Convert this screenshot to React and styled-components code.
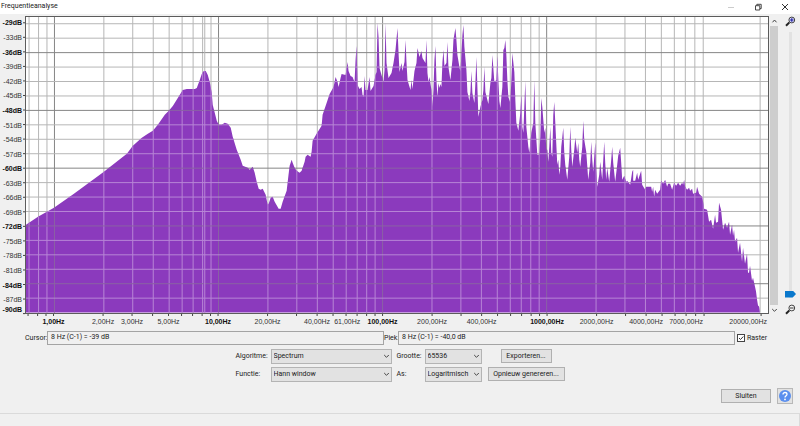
import React, { useState } from 'react'
import styled, { createGlobalStyle } from 'styled-components'

const GlobalStyle = createGlobalStyle`
    * { box-sizing: border-box; }
    body { margin: 0; background: #f0f0f0; }
    body, button, input, select {
        font-family: Roboto, 'Open Sans', sans-serif;
        font-size: 7px;
        color: #1a1a1a;
    }
`
const Window = styled.div`
    display: flex;
    flex-direction: column;
    min-height: 100vh;
    background-color: #f0f0f0;
`
const TitleBar = styled.header`
    display: flex;
    align-items: center;
    justify-content: space-between;
    height: 14px;
    padding: 0 11px 1px 1px;
    background-color: #fff;
`
const Title = styled.h1`
    margin: 0;
    font-size: 7px;
    font-weight: 400;
    line-height: 13px;
`
const WindowButtons = styled.div`
    display: flex;
    gap: 19px;
`
const IconButton = styled.button`
    display: flex;
    align-items: center;
    justify-content: center;
    width: ${({ $w }) => $w || 8}px;
    height: ${({ $h }) => $h || 8}px;
    padding: 0;
    border: none;
    background: none;
`
const ChartArea = styled.main`
    display: flex;
    flex: 1;
    min-height: 180px;
    padding-top: 2px;
`
const Chart = styled.div`
    display: grid;
    flex: 1;
    min-width: 0;
    grid-template-columns: 25px minmax(0, 1fr);
    grid-template-rows: minmax(0, 1fr) 16px;
`
const YAxis = styled.svg`
    width: 25px;
    height: 100%;
    overflow: visible;
`
const PlotFrame = styled.div`
    display: flex;
    min-width: 0;
    min-height: 0;
    border: 1px solid #5c5c5c;
    background-color: #fff;
`
const Plot = styled.svg`
    flex: 1;
    min-width: 0;
    height: 100%;
`
const XAxis = styled.svg`
    grid-column: 2;
    width: 100%;
    height: 16px;
    overflow: visible;
`
const AxisText = styled.text`
    font-family: 'Liberation Sans', Arial, sans-serif;
    font-size: 7px;
    font-weight: ${({ $bold }) => ($bold ? 700 : 400)};
    fill: ${({ $bold }) => ($bold ? '#111' : '#333')};
    text-anchor: ${({ $anchor }) => $anchor || 'middle'};
`
const ScrollBar = styled.div`
    display: flex;
    flex-direction: column;
    align-items: center;
    width: 8px;
    margin: 0 1px 15px 1px;
`
const ScrollThumb = styled.div`
    flex: 1;
    width: 8px;
    background-color: #cdcdcd;
`
const ZoomColumn = styled.div`
    display: flex;
    flex-direction: column;
    align-items: center;
    width: 21px;
    padding: 0 0 15px 2px;
`
const ZoomSlider = styled.input`
    appearance: none;
    writing-mode: vertical-lr;
    direction: rtl;
    flex: 1;
    width: 11px;
    min-height: 0;
    margin: 5px 0 6px;
    background: linear-gradient(#e2e2e2, #e2e2e2) center / 3px 100% no-repeat;

    &::-webkit-slider-thumb {
        appearance: none;
        width: 11px;
        height: 7px;
        background-color: #0a78cc;
        clip-path: polygon(0 0, 70% 0, 100% 50%, 70% 100%, 0 100%);
    }
`
const ReadoutRow = styled.div`
    display: flex;
    align-items: center;
    padding: 1px 34px 0 25px;
`
const Label = styled.label`
    flex: none;
    line-height: 10px;
    white-space: nowrap;
`
const ReadoutLabel = styled(Label)`
    width: ${({ $w }) => $w}px;
`
const Readout = styled.input`
    flex: 1;
    min-width: 0;
    height: 14px;
    padding: 0 3px 1px;
    border: 1px solid #a4a4a4;
    background-color: #f0f0f0;
    outline: none;
`
const RasterLabel = styled(Label)`
    display: flex;
    align-items: center;
    gap: 2px;
    width: 31px;
    padding-left: 2px;
`
const CheckboxBox = styled.span`
    display: grid;

    & > * { grid-area: 1 / 1; }
    & > svg { pointer-events: none; }
`
const Checkbox = styled.input`
    appearance: none;
    width: 8px;
    height: 8px;
    margin: 0;
    border: 1px solid #444;
    background-color: #fff;

    &:not(:checked) + svg { display: none; }
`
const Options = styled.div`
    display: grid;
    grid-template-columns: 35px 121px 33px 57px 83px;
    grid-template-rows: 15px 15px;
    row-gap: 3px;
    align-items: center;
    justify-content: center;
    padding-top: 4px;
`
const SizeLabel = styled(Label)`
    padding-left: 5px;
`
const SelectBox = styled.div`
    display: grid;
    align-items: center;

    & > * { grid-area: 1 / 1; }
    & > svg { justify-self: end; margin-right: 2px; pointer-events: none; }
`
const Select = styled.select`
    appearance: none;
    width: 100%;
    height: 15px;
    padding: 0 2px 1px;
    border: 1px solid #b4b4b4;
    border-radius: 0;
    background-color: #e2e2e2;
    outline: none;
`
const Button = styled.button`
    width: ${({ $w }) => $w}px;
    height: 14px;
    padding: 0;
    border: 1px solid #b0b0b0;
    background-color: #e2e2e2;
    line-height: 10px;
    white-space: nowrap;
`
const ButtonCell = styled.div`
    display: flex;
    justify-content: center;
    padding-left: 6px;
`
const Footer = styled.div`
    display: flex;
    align-items: center;
    justify-content: flex-end;
    gap: 6px;
    padding: 6px 7px 9px;
`
const HelpButton = styled(IconButton)`
    border: 1px solid #b8b8b8;
    background-color: #e2e2e2;
`
const StatusBar = styled.footer`
    height: 14px;
    border-top: 1px solid #dadada;
    border-right: 1px solid #dadada;
`

// log10 of the frequencies at the two ends of the plot
const LOG_MIN = -0.1735
const LOG_MAX = 4.349
const DB_TOP = -28.6
const DB_BOTTOM = -90

const freqRatio = (hz) => (Math.log10(hz) - LOG_MIN) / (LOG_MAX - LOG_MIN)
const dbRatio = (db) => (DB_TOP - db) / (DB_TOP - DB_BOTTOM)
const percent = (ratio) => `${ratio * 100}%`

const frequencies = [0.7, 0.8, 0.9]
for (let decade = 1; decade <= 1000; decade *= 10) {
    for (let n = 1; n < 10; n++) frequencies.push(n * decade)
}
frequencies.push(20000)

const levels = []
for (let db = -30; db > -90; db -= 3) levels.push(db)

const isMajorFreq = (hz) => [1, 10, 100, 1000].includes(hz)
const isMajorLevel = (db) => db % 12 === 0

const freqLabels = [
    [1, '1,00Hz', true], [2, '2,00Hz'], [3, '3,00Hz'], [5, '5,00Hz'],
    [10, '10,00Hz', true], [20, '20,00Hz'], [40, '40,00Hz'], [61, '61,00Hz'],
    [100, '100,00Hz', true], [200, '200,00Hz'], [400, '400,00Hz'],
    [1000, '1000,00Hz', true], [2000, '2000,00Hz'], [4000, '4000,00Hz'], [7000, '7000,00Hz'],
]

const PLOT_BOX = '26 17 743 296'
const SPECTRUM = `
26,225 38,217 54,208 74,194 104,172 118,161 127,154 133,146 142,138 148,134 153,131 158,125 165,115 169,111
173,106 178,98 183,90 187,89 195,89 197,88 200,80 202,74 204,71 206,71 208,75 210,82 212,93 213,105 215,113
217,121 219,125 222,125 225,123 228,124 231,128 233,137 237,150 241,160 243,166 248,168 250,170 253,167
255,173 257,182 259,189 261,190 263,189 266,195 268,205 269,204 271,198 273,197 275,202 279,209 281,209
283,202 287,191 289,174 290,166 292,160 293,163 295,168 297,171 300,173 302,171 305,162 306,157 308,155
311,157 312,152 313,141 317,134 322,126 323,115 327,103 330,94 334,87 336,77 338,82 339,87 341,78 342,74
346,75 348,62 349,71 351,76 353,77 355,82 356,60 357,46 358,85 360,89 362,87 363,95 364,97 365,76 366,90
368,90 370,77 371,91 374,86 376,75 377,72 378,23 379,37 380,68 382,75 384,82 385,70 386,23 387,63 389,78
392,73 394,63 396,50 398,28 399,52 400,72 402,63 403,71 405,62 406,40 407,62 408,80 411,90 412,80 413,89
415,71 417,63 418,48 420,57 422,51 423,58 426,63 427,40 428,73 429,82 430,77 432,90 433,107 434,90 435,60
436,46 437,80 438,97 439,83 440,88 441,84 442,87 443,62 444,50 445,66 447,63 448,42 449,67 451,80 453,60
454,40 456,28 457,40 458,55 460,67 461,72 463,35 464,25 465,47 467,70 468,92 470,101 471,92 472,71 473,93
475,103 476,83 477,57 478,87 479,117 481,107 483,100 484,90 485,67 486,92 489,104 491,83 492,78 493,55
495,82 497,80 498,56 499,80 500,101 501,108 503,87 504,50 505,48 506,40 507,55 508,80 509,97 511,103
512,80 513,53 515,72 516,100 517,123 519,131 521,113 522,95 523,127 524,133 525,107 526,81 527,127
529,147 530,153 532,133 534,123 535,80 536,123 537,139 538,155 540,155 541,137 542,98 543,107 545,133
546,128 547,150 548,150 549,162 550,147 551,127 552,153 553,157 554,115 555,102 556,123 558,165 559,160
560,175 561,168 562,147 564,128 565,153 566,165 568,180 570,157 571,127 572,150 573,167 575,150 576,138
578,153 579,143 580,160 581,167 583,147 584,121 585,140 587,152 589,180 591,163 592,142 593,160 594,172
596,143 597,170 598,187 600,175 601,162 603,180 605,142 606,163 607,180 608,168 610,182 612,160 613,147
614,163 616,182 618,165 619,156 621,148 622,163 623,180 625,176 627,182 628,181 631,185 633,172 634,170
634,181 636,181 638,173 639,180 642,171 643,185 646,190 647,187 652,187 653,192 654,187 655,197 656,190
658,194 661,190 662,181 664,184 666,180 668,187 669,184 671,184 673,190 675,183 677,186 679,183 681,186
683,183 684,185 685,180 686,187 688,190 690,188 691,191 693,189 694,194 697,193 698,187 700,194 703,197
704,202 705,209 708,210 710,222 712,220 714,229 716,215 717,223 719,222 720,203 722,210 723,220 724,230
726,223 728,228 730,222 731,235 733,225 734,236 735,230 736,242 738,238 739,253 741,243 742,252 743,262
744,248 746,264 748,254 749,273 750,273 751,266 753,281 754,278 756,287 757,292 758,300 759,306 760,307
761,313 26,313`

const GridLines = ({ minor, major }) => (
    <g>
        {frequencies.map((hz) => {
            const x = 26 + freqRatio(hz) * 743
            return <line key={hz} x1={x} x2={x} y1="17" y2="313" stroke={isMajorFreq(hz) ? major : minor} />
        })}
        {levels.map((db) => {
            const y = 17 + dbRatio(db) * 296
            return <line key={db} x1="26" x2="769" y1={y} y2={y} stroke={isMajorLevel(db) ? major : minor} />
        })}
        <line x1="205" x2="205" y1="17" y2="313" stroke={minor} />
    </g>
)

const Chevron = ({ up }) => (
    <svg width="7" height="6" viewBox="0 0 7 6" fill="none" stroke="#444">
        <path d={up ? 'M1.5 4.3 3.5 2l2 2.3' : 'M1.2 2l2.3 2.3L5.8 2'} />
    </svg>
)

const Magnifier = ({ plus }) => (
    <svg width="11" height="11" viewBox="0 0 11 11">
        <path d="M1 9.8 4.4 6.4" stroke="#222" strokeWidth="2" />
        <circle cx="6.8" cy="4" r="2.9" fill={plus ? '#dcdcff' : '#f4f4f4'} stroke="#444" />
        <path d={plus ? 'M5 4h3.6M6.8 2.2v3.6' : 'M5 4h3.6'} stroke={plus ? '#2424a0' : '#555'} strokeWidth="1.2" />
    </svg>
)

const Dropdown = ({ id, options }) => (
    <SelectBox>
        <Select id={id}>
            {options.map((option) => <option key={option}>{option}</option>)}
        </Select>
        <Chevron />
    </SelectBox>
)

const App = () => {
    const [raster, setRaster] = useState(true)
    const [zoom, setZoom] = useState(0)

    return (
        <Window>
            <GlobalStyle />
            <TitleBar>
                <Title>Frequentieanalyse</Title>
                <WindowButtons>
                    <IconButton aria-label="Minimaliseren">
                        <svg width="8" height="8" viewBox="0 0 8 8"><path d="M1 4.5h6" stroke="#ccc" /></svg>
                    </IconButton>
                    <IconButton aria-label="Herstellen">
                        <svg width="8" height="8" viewBox="0 0 8 8" fill="none" stroke="#333" strokeWidth="0.9">
                            <path d="M1.5 2.7h4.3v4.3H1.5zM2.8 2.5V1.3h4.4v4.3H6" />
                        </svg>
                    </IconButton>
                    <IconButton aria-label="Venster sluiten">
                        <svg width="8" height="8" viewBox="0 0 8 8"><path d="M1 1l6 6M7 1 1 7" stroke="#333" /></svg>
                    </IconButton>
                </WindowButtons>
            </TitleBar>

            <ChartArea>
                <Chart>
                    <YAxis>
                        {levels.map((db) => (
                            <g key={db}>
                                <line x1="23" x2="25" y1={percent(dbRatio(db))} y2={percent(dbRatio(db))} stroke="#444" />
                                <AxisText
                                    x="22"
                                    y={percent(dbRatio(db))}
                                    dy={db === -30 ? 2 : 3}
                                    $anchor="end"
                                    $bold={db === -30 || isMajorLevel(db)}
                                >
                                    {`${db === -30 ? -29 : db}dB`}
                                </AxisText>
                            </g>
                        ))}
                        <line x1="23" x2="25" y1="100%" y2="100%" stroke="#444" />
                        <AxisText x="22" y="100%" dy="-2" $anchor="end" $bold>-90dB</AxisText>
                    </YAxis>
                    <PlotFrame>
                        <Plot viewBox={PLOT_BOX} preserveAspectRatio="none">
                            <clipPath id="spectrum"><polygon points={SPECTRUM} /></clipPath>
                            {raster && <GridLines minor="#b6b6b6" major="#858585" />}
                            <polygon points={SPECTRUM} fill="#8b3abd" />
                            {raster && (
                                <g clipPath="url(#spectrum)">
                                    <GridLines minor="#b886d6" major="#8a62a4" />
                                </g>
                            )}
                        </Plot>
                    </PlotFrame>
                    <XAxis>
                        {frequencies.map((hz) => (
                            <line key={hz} x1={percent(freqRatio(hz))} x2={percent(freqRatio(hz))} y1="0" y2="2" stroke="#444" />
                        ))}
                        {freqLabels.map(([hz, text, bold]) => (
                            <AxisText key={hz} x={percent(freqRatio(hz))} y="10" $bold={bold}>{text}</AxisText>
                        ))}
                        <AxisText x="100%" dx="-2" y="10" $anchor="end">20000,00Hz</AxisText>
                    </XAxis>
                </Chart>
                <ScrollBar>
                    <IconButton $h={10} aria-label="Omhoog"><Chevron up /></IconButton>
                    <ScrollThumb />
                    <IconButton $h={10} aria-label="Omlaag"><Chevron /></IconButton>
                </ScrollBar>
                <ZoomColumn>
                    <IconButton $w={11} $h={11} aria-label="Inzoomen"><Magnifier plus /></IconButton>
                    <ZoomSlider
                        type="range"
                        aria-label="Zoom"
                        value={zoom}
                        onChange={(e) => setZoom(Number(e.target.value))}
                    />
                    <IconButton $w={11} $h={11} aria-label="Uitzoomen"><Magnifier /></IconButton>
                </ZoomColumn>
            </ChartArea>

            <ReadoutRow>
                <ReadoutLabel htmlFor="cursor" $w={22}>Cursor:</ReadoutLabel>
                <Readout id="cursor" readOnly value="8 Hz (C-1) = -39 dB" />
                <ReadoutLabel htmlFor="peak" $w={14}>Piek:</ReadoutLabel>
                <Readout id="peak" readOnly value="8 Hz (C-1) = -40,0 dB" />
                <RasterLabel>
                    <CheckboxBox>
                        <Checkbox type="checkbox" checked={raster} onChange={(e) => setRaster(e.target.checked)} />
                        <svg width="8" height="8" viewBox="0 0 8 8"><path d="M2 4l1.5 1.5L6.3 2.5" fill="none" stroke="#333" /></svg>
                    </CheckboxBox>
                    Raster
                </RasterLabel>
            </ReadoutRow>

            <Options>
                <Label htmlFor="algorithm">Algoritme:</Label>
                <Dropdown id="algorithm" options={['Spectrum', 'Cepstrum']} />
                <SizeLabel htmlFor="size">Grootte:</SizeLabel>
                <Dropdown id="size" options={['65536', '32768', '16384']} />
                <ButtonCell><Button $w={51}>Exporteren...</Button></ButtonCell>
                <Label htmlFor="function">Functie:</Label>
                <Dropdown id="function" options={['Hann window', 'Hamming window']} />
                <SizeLabel htmlFor="axis">As:</SizeLabel>
                <Dropdown id="axis" options={['Logaritmisch', 'Lineair']} />
                <ButtonCell><Button $w={77}>Opnieuw genereren...</Button></ButtonCell>
            </Options>

            <Footer>
                <Button $w={50}>Sluiten</Button>
                <HelpButton $w={16} $h={16} aria-label="Help">
                    <svg width="14" height="14" viewBox="0 0 14 14">
                        <circle cx="7" cy="7" r="6" fill="#5b8fee" />
                        <path d="M5 5.4C5 2.8 9 2.9 9 5.3 9 6.8 7 6.7 7 8.6" fill="none" stroke="#fff" strokeWidth="1.3" />
                        <circle cx="7" cy="10.4" r="0.9" fill="#fff" />
                    </svg>
                </HelpButton>
            </Footer>
            <StatusBar />
        </Window>
    )
}

export default App
